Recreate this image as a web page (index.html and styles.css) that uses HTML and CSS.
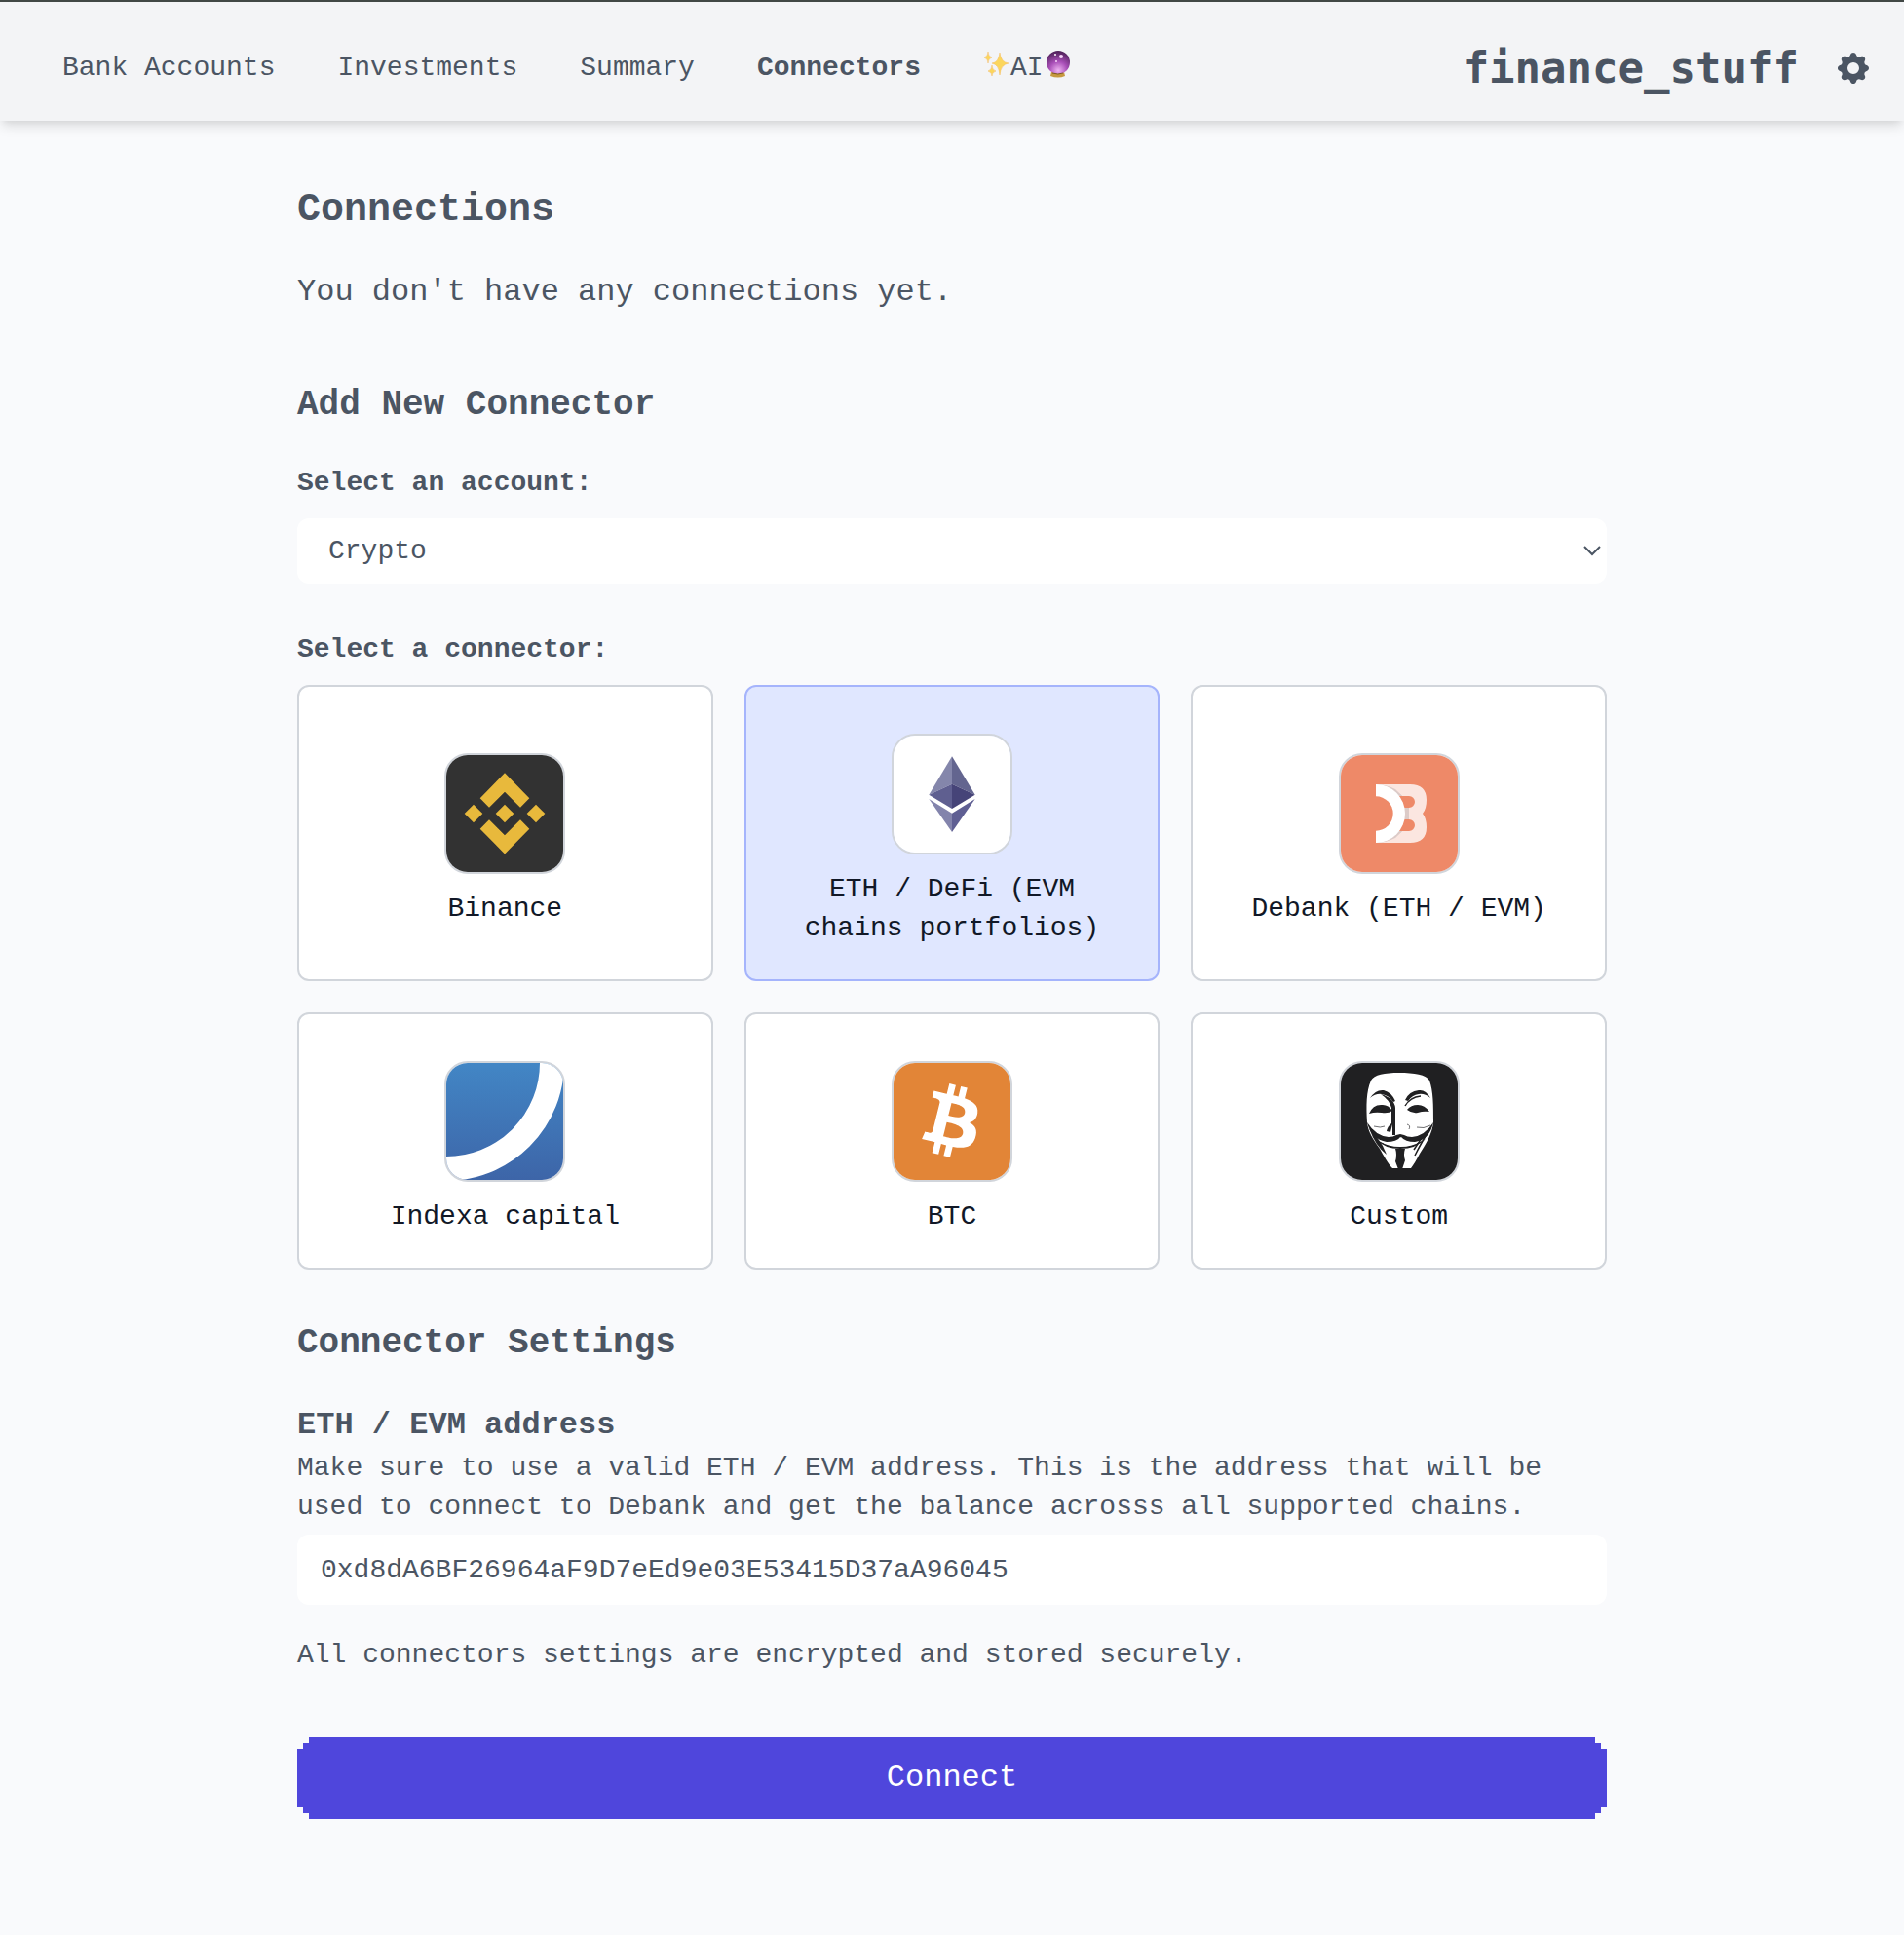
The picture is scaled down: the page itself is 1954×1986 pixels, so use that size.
FILE: index.html
```html
<!DOCTYPE html>
<html lang="en">

<head>
    <meta charset="UTF-8">
    <meta name="viewport" content="width=device-width, initial-scale=1.0">
    <title>finance_stuff - Connectors</title>
    <link rel="stylesheet" href="styles.css">
</head>

<body>
    <header class="topbar">
        <nav class="menu">
            <a href="#">Bank Accounts</a>
            <a href="#">Investments</a>
            <a href="#">Summary</a>
            <a href="#" class="active">Connectors</a>
            <a href="#" class="ai-link">
                <svg class="emoji" viewBox="0 0 28 28" aria-hidden="true">
                    <g fill="#fbd65c" stroke="#f5b95f" stroke-width="0.5">
                        <path d="M17 2q1 10 9 11q-8 1-9 12q-1-11-8-12q7-1 8-11z" />
                        <path d="M5 1q0 5 4 6q-4 1-4 6q0-5-4-6q4-1 4-6z" />
                        <path d="M9 15q0 5 4 6q-4 1-4 5q0-4-4-5q4-1 4-6z" />
                    </g>
                </svg><span>AI</span><svg class="emoji" viewBox="0 0 28 28" aria-hidden="true">
                    <defs>
                        <radialGradient id="ball" cx="0.5" cy="0.85" r="0.85">
                            <stop offset="0" stop-color="#efb4f2" />
                            <stop offset="0.45" stop-color="#a94fb8" />
                            <stop offset="1" stop-color="#4b1f55" />
                        </radialGradient>
                    </defs>
                    <path d="M8 22h13l1 4q-7 3-15 0z" fill="#c6993f" />
                    <circle cx="15" cy="12" r="12" fill="url(#ball)" />
                    <path d="M9 23q6 2 11 0" fill="none" stroke="#7d5a1c" stroke-width="1" />
                    <circle cx="12" cy="4" r="1" fill="#fff" />
                    <circle cx="18" cy="6" r="2" fill="#f6d6f8" />
                    <circle cx="13" cy="11" r="1" fill="#f6d6f8" />
                </svg>
            </a>
        </nav>
        <div class="brand">
            <a href="#" class="logo">finance_stuff</a>
            <button type="button" class="settings" aria-label="Settings">
                <svg viewBox="0 0 20 20" fill="currentColor">
                    <path fill-rule="evenodd" clip-rule="evenodd" d="M11.49 3.17c-.38-1.56-2.6-1.56-2.98 0a1.532 1.532 0 01-2.286.948c-1.372-.836-2.942.734-2.106 2.106.54.886.061 2.042-.947 2.287-1.561.379-1.561 2.6 0 2.978a1.532 1.532 0 01.947 2.287c-.836 1.372.734 2.942 2.106 2.106a1.532 1.532 0 012.287.947c.379 1.561 2.6 1.561 2.978 0a1.533 1.533 0 012.287-.947c1.372.836 2.942-.734 2.106-2.106a1.533 1.533 0 01.947-2.287c1.561-.379 1.561-2.6 0-2.978a1.532 1.532 0 01-.947-2.287c.836-1.372-.734-2.942-2.106-2.106a1.532 1.532 0 01-2.287-.947zM10 13a3 3 0 100-6 3 3 0 000 6z" />
                </svg>
            </button>
        </div>
    </header>

    <main class="content">
        <h1>Connections</h1>
        <p class="empty">You don't have any connections yet.</p>

        <h2>Add New Connector</h2>
        <form>
            <label class="field-label" for="account">Select an account:</label>
            <div class="select-wrap">
                <select id="account" name="account">
                    <option>Crypto</option>
                </select>
                <svg class="chevron" viewBox="0 0 18 12" aria-hidden="true">
                    <path d="M1 1l8 8 8-8" fill="none" stroke="currentColor" stroke-width="2" />
                </svg>
            </div>

            <p class="field-label" id="connector-label">Select a connector:</p>
            <div class="connectors" role="group" aria-labelledby="connector-label">
                <button type="button" class="card">
                    <svg class="icon" viewBox="0 0 120 120" aria-hidden="true">
                        <rect width="120" height="120" fill="#323232" />
                        <g fill="#e8b93c">
                            <path d="M60 18.3l25.3 26-9.3 9.4-16-16-16 16-9.3-9.4z" />
                            <path d="M60 101.4l25.3-25.7-9.3-9.4-16 16-16-16-9.3 9.4z" />
                            <path d="M60 50.7l9.3 9.3-9.3 9.3-9.3-9.3z" />
                            <path d="M28 50.7l9.3 9.3-9.3 9.3-9.3-9.3z" />
                            <path d="M92 50.7l9.3 9.3-9.3 9.3-9.3-9.3z" />
                        </g>
                    </svg>
                    <span>Binance</span>
                </button>

                <button type="button" class="card selected">
                    <svg class="icon" viewBox="0 0 120 120" aria-hidden="true">
                        <rect width="120" height="120" fill="#fff" />
                        <path d="M60 21.3v28.4L36.3 60.7z" fill="#8486ab" />
                        <path d="M60 21.3v28.4l23.7 11z" fill="#63658f" />
                        <path d="M60 49.7V75L36.3 60.7z" fill="#5f5f90" />
                        <path d="M60 49.7V75l23.7-14.3z" fill="#464478" />
                        <path d="M36.3 65L60 79.7V99z" fill="#8384ac" />
                        <path d="M83.7 65L60 79.7V99z" fill="#5f5f93" />
                    </svg>
                    <span>ETH / DeFi (EVM chains portfolios)</span>
                </button>

                <button type="button" class="card">
                    <svg class="icon" viewBox="0 0 120 120" aria-hidden="true">
                        <rect width="120" height="120" fill="#ee8968" />
                        <path d="M36 30h35q17 0 17 16 0 9-4 14 4 5 4 14 0 16-17 16H36z" fill="#fbe6e0" />
                        <path d="M36 30q24 2 34 22v16Q60 88 36 90z" fill="#dccbc8" />
                        <path d="M36 30q10 0 20 5l7 7h-8zM36 90q10 0 20-5l7-7h-8z" fill="#dccbc8" />
                        <path d="M58 42h12a6 6 0 010 12H58zM58 66h12a6 6 0 010 12H58z" fill="#ee8968" />
                        <path d="M36 30a30 30 0 010 60z" fill="#fff" />
                        <path d="M34 42.3h2a17.7 17.7 0 010 35.4h-2z" fill="#ee8968" />
                    </svg>
                    <span>Debank (ETH / EVM)</span>
                </button>

                <button type="button" class="card">
                    <svg class="icon" viewBox="0 0 120 120" aria-hidden="true">
                        <defs>
                            <linearGradient id="indexa" x1="0" y1="0" x2="0" y2="1">
                                <stop offset="0" stop-color="#4286c5" />
                                <stop offset="1" stop-color="#3d65a8" />
                            </linearGradient>
                        </defs>
                        <rect width="120" height="120" fill="url(#indexa)" />
                        <circle cx="0" cy="0" r="108.5" fill="none" stroke="#fff" stroke-width="25" />
                    </svg>
                    <span>Indexa capital</span>
                </button>

                <button type="button" class="card">
                    <svg class="icon" viewBox="0 0 120 120" aria-hidden="true">
                        <rect width="120" height="120" fill="#e28537" />
                        <path transform="translate(-1.9 -1.8) scale(3.8)" fill="#fff" d="M23.189 14.02c.314-2.096-1.283-3.223-3.465-3.975l.708-2.84-1.728-.43-.69 2.765c-.454-.114-.92-.22-1.385-.326l.695-2.783L15.596 6l-.708 2.839c-.376-.086-.746-.17-1.104-.26l.002-.009-2.384-.595-.46 1.846s1.283.294 1.256.312c.7.175.826.638.805 1.006l-.806 3.235c.048.012.11.03.18.057l-.183-.045-1.13 4.532c-.086.212-.303.531-.793.41.018.025-1.256-.313-1.256-.313l-.858 1.978 2.25.561c.418.105.828.215 1.231.318l-.715 2.872 1.727.43.708-2.84c.472.127.93.245 1.378.357l-.706 2.828 1.728.43.715-2.866c2.948.558 5.164.333 6.097-2.333.752-2.146-.037-3.385-1.588-4.192 1.13-.26 1.98-1.003 2.207-2.538zm-3.95 5.538c-.533 2.147-4.148.986-5.32.695l.95-3.805c1.172.293 4.929.872 4.37 3.11zm.535-5.569c-.487 1.953-3.495.96-4.47.717l.86-3.45c.975.243 4.118.696 3.61 2.733z" />
                    </svg>
                    <span>BTC</span>
                </button>

                <button type="button" class="card">
                    <svg class="icon" viewBox="0 0 120 120" aria-hidden="true">
                        <rect width="120" height="120" fill="#202022" />
                        <path d="M31 18c3-6 14-8 29-8s28 2 31 8c4 11 4 25 4 43-1 11-7 21-14 32-3 6-6 11-9 15H53c-5-5-9-13-13-20-7-10-12-17-13-27-1-17-1-32 4-43z" fill="#fff" />
                        <g fill="#202022">
                            <path d="M30 36q6-9 14-8 8 2 12 11l-2 1q-5-7-12-8-6-1-12 4z" />
                            <path d="M92 36q-5-9-12-8-10 1-14 10l3 1q4-6 11-7 6-1 12 4z" />
                            <path d="M29 52q4-10 14-9 6 0 10 6-4 3-11 2-7-1-13 1z" />
                            <path d="M91 50q-5-7-12-7-7 0-11 5 5 4 11 3 6-2 12-1z" />
                            <path d="M41 32q14 4 15 14v28h-3V63l-2 8-4-1q1-5 5-8V46q-2-8-11-14z" />
                            <path d="M27 61q9 14 22 15 5 0 8-2l4-1 4 1q3 2 8 2 13-1 22-15-4 18-19 20-10 0-14-5-5 5-15 5-16-3-20-20z" />
                            <path d="M35 78q26 15 52 0-10 10-26 10T35 78z" />
                            <path d="M29 67q8 8 14 18l4 9q-11-8-18-27z" />
                            <path d="M56 88h10q-2 6 0 12l-3 9h-4l-3-8q2-7 0-13z" />
                        </g>
                        <path d="M56 82l5-6 5 6z" fill="#fff" />
                        <path d="M40 80q21 7 42 0-8 6-21 6t-21-6z" fill="#fff" />
                        <g fill="none" stroke="#202022">
                            <path d="M66 44q5-9 16-10" stroke-width="1.5" />
                            <path d="M34 65q7 2 11 0M78 66q7 2 14-2M68 63q4 1 2 5" stroke="#707072" />
                            <path d="M92 67q-8 12-16 28M89 70q-8 9-14 19" stroke-width="1.5" />
                        </g>
                    </svg>
                    <span>Custom</span>
                </button>
            </div>

            <h2 class="settings-title">Connector Settings</h2>
            <label class="setting-name" for="address">ETH / EVM address</label>
            <p id="address-help">Make sure to use a valid ETH / EVM address. This is the address that will be used to connect to Debank and get the balance acrosss all supported chains.</p>
            <input type="text" id="address" name="address" aria-describedby="address-help" value="0xd8dA6BF26964aF9D7eEd9e03E53415D37aA96045">
            <p class="note">All connectors settings are encrypted and stored securely.</p>
            <button type="submit" class="connect">Connect</button>
        </form>
    </main>
</body>

</html>
```
FILE: styles.css
```css
* {
    box-sizing: border-box;
}

body {
    margin: 0;
    background: #f9fafc;
    color: #4b5563;
    font-family: 'Courier New', 'Liberation Mono', monospace;
    font-size: 28px;
    line-height: 40px;
}

h1,
h2,
p {
    margin: 0;
}

a {
    color: inherit;
    text-decoration: none;
}

button,
input,
select {
    font: inherit;
    color: inherit;
    border: none;
}

button {
    cursor: pointer;
}

.topbar {
    display: flex;
    justify-content: space-between;
    align-items: center;
    padding: 32px 32px 18px 64px;
    border-top: 2px solid #414845;
    background: #f3f4f6;
    box-shadow: 0 8px 12px -2px rgba(0, 0, 0, 0.1), 0 4px 8px -4px rgba(0, 0, 0, 0.1);
}

.menu {
    display: flex;
    gap: 64px;
}

.menu .active {
    font-weight: bold;
}

.ai-link {
    display: flex;
    align-items: center;
}

.emoji {
    width: 28px;
    height: 28px;
    margin-bottom: 8px;
}

.brand {
    display: flex;
    align-items: center;
    gap: 36px;
}

.logo {
    font-family: 'DejaVu Sans Mono', monospace;
    font-size: 44px;
    line-height: 72px;
    font-weight: bold;
}

.settings {
    display: flex;
    padding: 0;
    background: none;
}

.settings svg {
    width: 40px;
    height: 40px;
}

.content {
    max-width: 1344px;
    margin: 0 auto;
    padding: 64px 0;
}

h1 {
    font-size: 40px;
    line-height: 56px;
}

h2 {
    margin-bottom: 32px;
    font-size: 36px;
    line-height: 56px;
}

.empty {
    margin: 32px 0 64px;
    font-size: 32px;
    line-height: 48px;
}

.field-label {
    display: block;
    margin-bottom: 16px;
    font-weight: bold;
}

.select-wrap {
    position: relative;
    margin-bottom: 48px;
}

select {
    display: block;
    width: 100%;
    height: 67px;
    padding: 0 32px;
    border-radius: 12px;
    background: white;
    appearance: none;
}

.chevron {
    position: absolute;
    top: 28px;
    right: 6px;
    width: 18px;
    height: 12px;
    pointer-events: none;
}

.connectors {
    display: grid;
    grid-template-columns: repeat(3, 1fr);
    gap: 32px;
}

.card {
    display: flex;
    flex-direction: column;
    align-items: center;
    justify-content: center;
    padding: 32px;
    border: 2px solid #d1d5db;
    border-radius: 12px;
    background: white;
    color: #111827;
}

.card.selected {
    background: #e0e7ff;
    border-color: #a5b4fc;
}

.icon {
    width: 124px;
    height: 124px;
    margin: 16px 0;
    border: 2px solid #d1d5db;
    border-radius: 24px;
}

.settings-title {
    margin-top: 48px;
}

.setting-name {
    display: block;
    font-size: 32px;
    line-height: 48px;
    font-weight: bold;
}

input {
    display: block;
    width: 100%;
    height: 72px;
    margin: 8px 0 32px;
    padding: 0 24px;
    border-radius: 12px;
    background: white;
}

.note {
    margin-bottom: 64px;
}

/* stepped pixel corners */
.connect {
    display: block;
    width: 100%;
    height: 84px;
    background: #4f46dc;
    color: white;
    font-size: 32px;
    clip-path: polygon(
        12px 0, calc(100% - 12px) 0, calc(100% - 12px) 6px,
        calc(100% - 6px) 6px, calc(100% - 6px) 12px, 100% 12px,
        100% calc(100% - 12px), calc(100% - 6px) calc(100% - 12px), calc(100% - 6px) calc(100% - 6px),
        calc(100% - 12px) calc(100% - 6px), calc(100% - 12px) 100%, 12px 100%,
        12px calc(100% - 6px), 6px calc(100% - 6px), 6px calc(100% - 12px),
        0 calc(100% - 12px), 0 12px, 6px 12px, 6px 6px, 12px 6px
    );
}
```
